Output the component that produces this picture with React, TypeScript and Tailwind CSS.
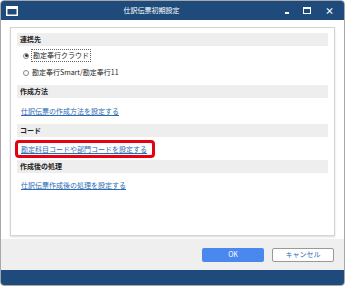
import React from "react";

function SectionHeader({ children }: { children: React.ReactNode }) {
  return (
    <div className="flex h-[13px] items-center bg-[#eeeeee] px-[3px] text-[7px] font-bold leading-none text-[#222]">
      {children}
    </div>
  );
}

function LinkText({ children }: { children: React.ReactNode }) {
  return (
    <span className="text-[7px] leading-none text-[#2c6cb3] underline underline-offset-1">{children}</span>
  );
}

export default function App() {
  return (
    <div
      className="flex h-[286px] w-[345px] flex-col overflow-hidden rounded-[4px] border border-[#a8a8a8] bg-[#efefef]"
      style={{ fontFamily: '"Noto Sans CJK JP", "Noto Sans", sans-serif' }}
    >
      {/* title bar */}
      <div className="relative flex h-[19px] shrink-0 items-center bg-[#1e4b7b] px-[5px]">
        <svg width="12" height="10" viewBox="0 0 12 10" className="shrink-0">
          <rect x="0.75" y="0.75" width="10.5" height="8.5" fill="none" stroke="#fff" strokeWidth="1.5" />
          <rect x="1" y="1" width="10" height="2" fill="#fff" />
        </svg>
        <div className="flex-1 text-center text-[7px] text-white">仕訳伝票初期設定</div>
        <div className="flex items-center gap-[14px] pr-[5px] text-white">
          <div className="mt-[5px] h-[2px] w-[4px] bg-white" />
          <div className="h-[7px] w-[8px] border border-white border-t-2" />
          <span className="text-[9px] font-bold leading-none">×</span>
        </div>
      </div>

      {/* body */}
      <div className="flex-1 bg-white px-[9px] pt-[7px] pb-[3px]">
        <div className="flex h-full flex-col border border-[#d4d4d4] px-[6px] pt-[5px] shadow-[0_1px_2px_rgba(0,0,0,0.15)]">
          <SectionHeader>連携先</SectionHeader>
          <div className="flex flex-col gap-[7px] pt-[3px] pl-[6px]">
            <label className="flex items-center gap-[2px]">
              <span className="flex h-[6px] w-[6px] items-center justify-center rounded-full border border-[#888]">
                <span className="h-[3px] w-[3px] rounded-full bg-[#333]" />
              </span>
              <span className="border border-dotted border-[#666] px-[1px] py-[2px] text-[7px] leading-none text-[#222]">
                勘定奉行クラウド
              </span>
            </label>
            <label className="flex items-center gap-[2px]">
              <span className="h-[6px] w-[6px] rounded-full border border-[#888]" />
              <span className="px-[1px] text-[7px] leading-none text-[#222]">勘定奉行Smart/勘定奉行11</span>
            </label>
          </div>

          <div className="mt-[9px]">
            <SectionHeader>作成方法</SectionHeader>
          </div>
          <div className="flex h-[26px] items-center pl-[4px]">
            <LinkText>仕訳伝票の作成方法を設定する</LinkText>
          </div>

          <SectionHeader>コード</SectionHeader>
          <div className="-ml-[2px] mt-[3px] flex h-[18px] w-[140px] items-center rounded-[4px] border-[3px] border-[#e60012] pl-[3px]">
            <LinkText>勘定科目コードや部門コードを設定する</LinkText>
          </div>

          <div className="mt-[2px]">
            <SectionHeader>作成後の処理</SectionHeader>
          </div>
          <div className="flex h-[24px] items-center pl-[4px]">
            <LinkText>仕訳伝票作成後の処理を設定する</LinkText>
          </div>
        </div>
      </div>

      {/* footer */}
      <div className="flex h-[31px] shrink-0 items-center justify-end gap-[8px] pr-[10px]">
        <button className="flex h-[14px] w-[62px] items-center justify-center rounded-[2px] bg-[#4a87ee] text-[7px] leading-none text-white">
          OK
        </button>
        <button className="flex h-[14px] w-[62px] items-center justify-center rounded-[2px] border border-[#999] bg-white text-[7px] leading-none text-[#2c6cb3]">
          キャンセル
        </button>
      </div>

      {/* bottom bar */}
      <div className="h-[15px] shrink-0 bg-[#1e4b7b]" />
    </div>
  );
}
